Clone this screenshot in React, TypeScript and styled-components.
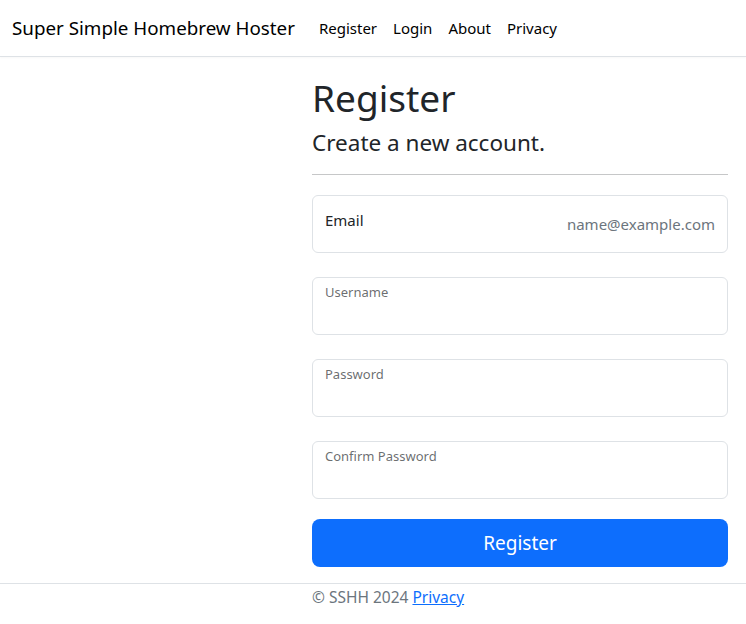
import styled, { createGlobalStyle } from "styled-components";

const GlobalStyle = createGlobalStyle`
  html, body {
    margin: 0;
    padding: 0;
    background: #fff;
  }
  body {
    font-family: "Noto Sans", "Open Sans", "Liberation Sans", sans-serif;
    color: #212529;
    font-size: 16px;
  }
  * {
    box-sizing: border-box;
  }
`;

interface FieldProps {
  label: string;
  placeholder?: string;
}

const FloatingField = (props: FieldProps) => {
  if (props.placeholder) {
    return (
      <FieldBox>
        <PlainLabel>{props.label}</PlainLabel>
        <Placeholder>{props.placeholder}</Placeholder>
      </FieldBox>
    );
  }
  return (
    <FieldBox>
      <SmallLabel>{props.label}</SmallLabel>
    </FieldBox>
  );
};

const App = () => {
  return (
    <Page>
      <GlobalStyle />
      <Navbar>
        <Brand>Super Simple Homebrew Hoster</Brand>
        <NavList>
          <NavLink>Register</NavLink>
          <NavLink>Login</NavLink>
          <NavLink>About</NavLink>
          <NavLink>Privacy</NavLink>
        </NavList>
      </Navbar>
      <Main>
        <FormColumn>
          <Title>Register</Title>
          <SubTitle>Create a new account.</SubTitle>
          <Divider />
          <Fields>
            <FloatingField label="Email" placeholder="name@example.com" />
            <FloatingField label="Username" />
            <FloatingField label="Password" />
            <FloatingField label="Confirm Password" />
            <SubmitBtn>Register</SubmitBtn>
          </Fields>
        </FormColumn>
      </Main>
      <Footer>
        <FooterText>
          © SSHH 2024 <FooterLink href="#">Privacy</FooterLink>
        </FooterText>
      </Footer>
    </Page>
  );
};

export default App;

const Page = styled.div`
  display: flex;
  flex-direction: column;
  width: 746px;
  min-height: 624px;
`;

const Navbar = styled.nav`
  display: flex;
  align-items: center;
  height: 57px;
  padding: 0 12px 1px;
  border-bottom: 1px solid #dee2e6;
  box-shadow: 0 1px 2px rgba(0, 0, 0, 0.03);
`;

const Brand = styled.div`
  font-size: 18.8px;
  color: #000;
  margin-right: 16px;
  white-space: nowrap;
`;

const NavList = styled.div`
  display: flex;
`;

const NavLink = styled.div`
  font-size: 15px;
  color: #000;
  padding: 8px;
`;

const Main = styled.main`
  display: flex;
  padding: 18px 0 0 312px;
`;

const FormColumn = styled.div`
  display: flex;
  flex-direction: column;
  width: 416px;
`;

const Title = styled.h1`
  margin: 0 0 7px;
  font-size: 37px;
  font-weight: 400;
  line-height: 46px;
`;

const SubTitle = styled.h4`
  margin: 0;
  font-size: 22.5px;
  font-weight: 400;
  line-height: 30px;
`;

const Divider = styled.hr`
  margin: 16px 0 20px;
  border: 0;
  border-top: 1px solid #c6c7c8;
`;

const Fields = styled.div`
  display: flex;
  flex-direction: column;
  gap: 24px;
`;

const FieldBox = styled.div`
  position: relative;
  display: flex;
  justify-content: space-between;
  height: 58px;
  border: 1px solid #dee2e6;
  border-radius: 6px;
  background: #fff;
`;

const PlainLabel = styled.label`
  font-size: 15px;
  line-height: 24px;
  padding: 12px 12px;
  color: #212529;
`;

const Placeholder = styled.span`
  font-size: 15px;
  line-height: 24px;
  padding: 16px 12px;
  color: #6c757d;
`;

const SmallLabel = styled.label`
  font-size: 13px;
  line-height: 18px;
  padding: 5px 12px;
  color: rgba(33, 37, 41, 0.68);
`;

const SubmitBtn = styled.button`
  margin-top: -4px;
  height: 48px;
  border: 0;
  border-radius: 8px;
  background: #0d6efd;
  color: #fff;
  font-family: inherit;
  font-size: 19px;
`;

const Footer = styled.footer`
  margin-top: 16px;
  border-top: 1px solid #dee2e6;
  padding-left: 312px;
`;

const FooterText = styled.div`
  font-size: 15.5px;
  line-height: 26px;
  color: #6c757d;
  white-space: nowrap;
`;

const FooterLink = styled.a`
  color: #0d6efd;
  text-decoration: underline;
`;
